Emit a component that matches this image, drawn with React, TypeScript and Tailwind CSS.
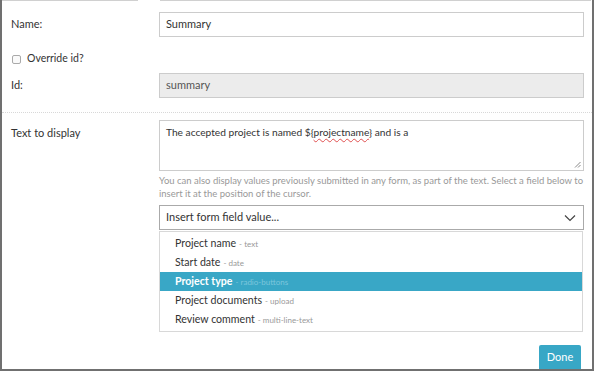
import React from "react";

// Form field editor panel: name / id / text-to-display with field picker

const fields = [
  { name: "Project name", type: "text" },
  { name: "Start date", type: "date" },
  { name: "Project type", type: "radio-buttons", active: true },
  { name: "Project documents", type: "upload" },
  { name: "Review comment", type: "multi-line-text" },
];

const ResizeGrip = () => (
  <svg className="absolute bottom-[2px] right-[2px] h-[7px] w-[7px]" viewBox="0 0 7 7">
    <path d="M6.5 1 L1 6.5 M6.5 4 L4 6.5" stroke="#888" strokeWidth="1" fill="none" />
  </svg>
);

export default function App() {
  return (
    <div className="h-[372px] w-[595px] overflow-hidden bg-white font-['Lato','Open_Sans',sans-serif] text-[#333]">
      <div className="flex h-[371px] w-[594px] flex-col border-b-2 border-l-2 border-r-2 border-[#707070]">
        {/* cut-off row above */}
        <div className="flex h-px shrink-0">
          <div className="w-[136px] bg-[#d0d0d0]" />
          <div className="w-[22px]" />
          <div className="mr-[1px] flex-1 bg-[#d0d0d0]" />
        </div>

        {/* Name */}
        <div className="mt-[11px] flex items-center">
          <label className="w-[157px] pl-[9px] text-[11px]">Name:</label>
          <div className="flex h-[25px] w-[425px] items-center border border-[#ccc] px-[6px] text-[11px]">
            Summary
          </div>
        </div>

        {/* Override */}
        <div className="mt-[14px] flex h-[16px] items-center pl-[10px] text-[10.5px]">
          <span className="mr-[6px] inline-block h-[9px] w-[9px] rounded-[2px] border border-[#aaa] bg-[#fafafa]" />
          Override id?
        </div>

        {/* Id */}
        <div className="mt-[6px] flex items-center">
          <label className="w-[157px] pl-[9px] text-[11px]">Id:</label>
          <div className="flex h-[25px] w-[425px] items-center border border-[#ccc] bg-[#ececec] px-[6px] text-[11px] text-[#555]">
            summary
          </div>
        </div>

        <div className="mt-[14px] border-t border-dotted border-[#d8d8d8]" />

        {/* Text to display */}
        <div className="mt-[7px] flex">
          <label className="w-[157px] pl-[9px] pt-[5px] text-[11px]">Text to display</label>
          <div className="flex w-[425px] flex-col">
            <div className="relative h-[51px] border border-[#ccc] px-[6px] pt-[4px] text-[10.2px]">
              The accepted project is named ${"{"}
              <span className="underline decoration-wavy decoration-[#e05050] decoration-[1px] underline-offset-2">projectname</span>
              {"}"} and is a
              <ResizeGrip />
            </div>
            <p className="mt-[3px] text-[9.5px] leading-[13px] text-[#999]">
              You can also display values previously submitted in any form, as part of the text. Select a field below to
              insert it at the position of the cursor.
            </p>
            <div className="mt-[5px] flex h-[25px] items-center justify-between border border-[#aaa] px-[6px] text-[11px]">
              <span>Insert form field value...</span>
              <svg className="mr-[1px] h-[8px] w-[12px]" viewBox="0 0 12 8">
                <path d="M1 1.5 L6 6.5 L11 1.5" stroke="#444" strokeWidth="1.2" fill="none" />
              </svg>
            </div>
            <ul className="mr-[1px] mt-[1px] border border-[#d8d8d8] py-[2px]">
              {fields.map((f) => (
                <li
                  key={f.name}
                  className={`flex h-[19px] items-center pl-[15px] text-[10.6px] ${
                    f.active ? "bg-[#39a7c6] font-bold text-white" : "text-[#333]"
                  }`}
                >
                  {f.name}
                  <span className={`ml-[3px] text-[8px] font-normal ${f.active ? "text-[#7cc6dc]" : "text-[#999]"}`}>
                    - {f.type}
                  </span>
                </li>
              ))}
            </ul>
          </div>
        </div>

        {/* Footer */}
        <div className="mt-auto flex justify-end pr-[11px]">
          <button className="h-[24px] w-[42px] rounded-t-[2px] bg-[#38a7c6] text-[11px] text-white">Done</button>
        </div>
      </div>
    </div>
  );
}
